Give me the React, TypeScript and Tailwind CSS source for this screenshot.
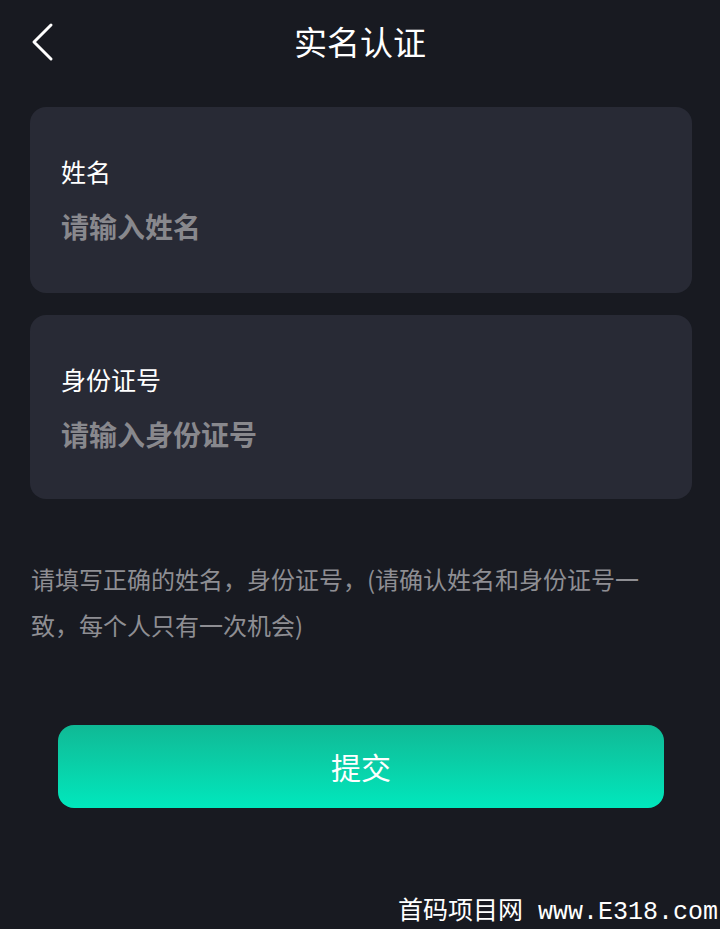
export default function App() {
  const cjk = { fontFamily: '"Noto Sans CJK SC", "Noto Sans", sans-serif' };
  return (
    <div className="relative min-h-[929px] bg-[#181a21] text-white" style={cjk}>
      <div className="relative flex h-[85px] items-start justify-center pt-[20px]">
        <button className="absolute left-[25px] top-[17px] p-1">
          <svg width="28" height="42" viewBox="0 0 28 42" fill="none">
            <polyline
              points="22,4 5,21 22,38"
              stroke="white"
              strokeWidth="3"
              strokeLinecap="round"
              strokeLinejoin="round"
            />
          </svg>
        </button>
        <h1 className="text-[33px] leading-[42px] font-normal">实名认证</h1>
      </div>

      <div className="ml-[30px] mr-[28px] mt-[22px] rounded-[16px] bg-[#282a35] pl-[31px] pt-[46px] pb-[47px]">
        <p className="text-[25px] leading-[36px]">姓名</p>
        <p className="mt-[17px] text-[28px] leading-[40px] font-bold text-[#88888d]">请输入姓名</p>
      </div>

      <div className="ml-[30px] mr-[28px] mt-[22px] rounded-[16px] bg-[#282a35] pl-[31px] pt-[46px] pb-[45px]">
        <p className="text-[25px] leading-[36px]">身份证号</p>
        <p className="mt-[17px] text-[28px] leading-[40px] font-bold text-[#88888d]">请输入身份证号</p>
      </div>

      <p className="mx-[31px] mt-[57px] w-[625px] text-[24px] leading-[46px] text-[#8e8e93]">
        请填写正确的姓名，身份证号，(请确认姓名和身份证号一致，每个人只有一次机会)
      </p>

      <button className="mx-[58px] mt-[77px] flex h-[83px] w-[606px] items-center justify-center rounded-[16px] bg-gradient-to-b from-[#0fb995] to-[#00e8bd] text-[30px] text-white">
        提交
      </button>

      <div
        className="absolute bottom-[0px] right-[2px] text-[25px] leading-[32px] text-white"
        style={{ fontFamily: '"Liberation Mono", "Noto Sans CJK SC", monospace' }}
      >
        首码项目网 www.E318.com
      </div>
    </div>
  );
}
